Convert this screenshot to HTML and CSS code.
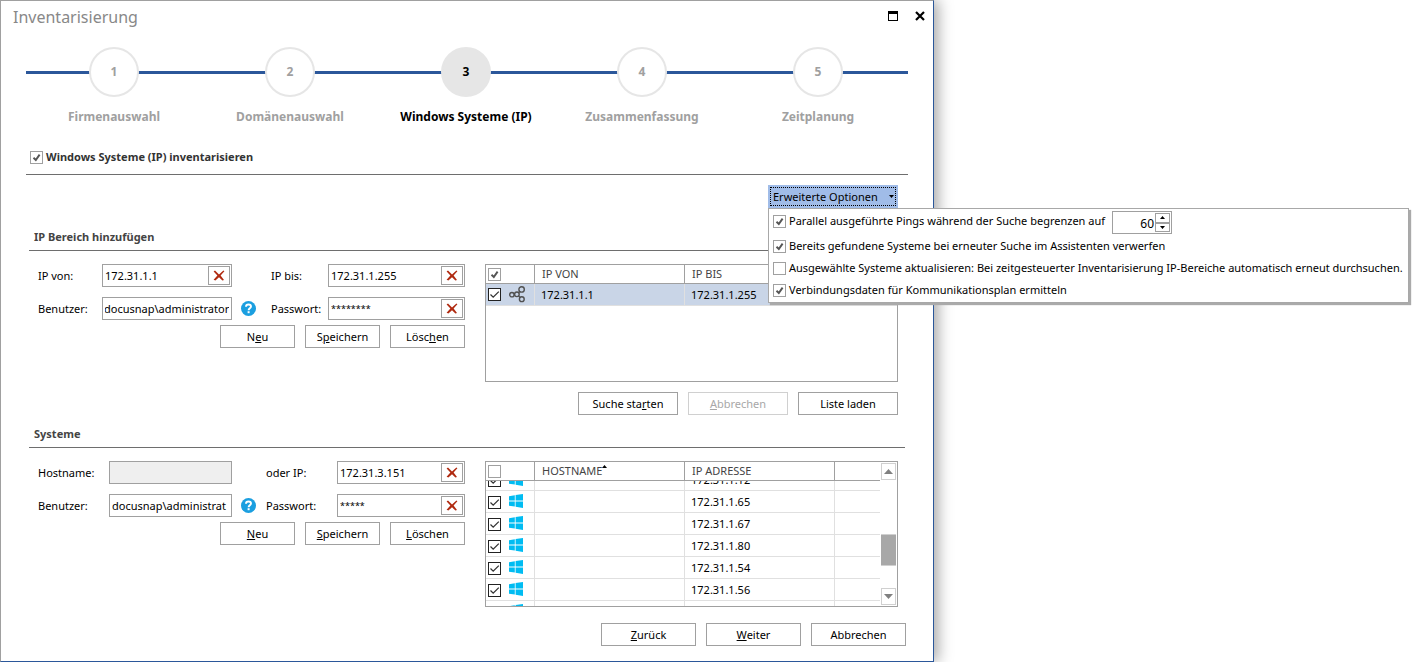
FILE: index.html
```html
<!DOCTYPE html>
<html lang="de">
<head>
<meta charset="utf-8">
<title>Inventarisierung</title>
<link rel="stylesheet" href="styles.css">
</head>
<body>
<svg class="defs" aria-hidden="true">
  <symbol id="cross" viewBox="0 0 12 11"><path d="M2 0.5 6 4.6 10.4 0.4 11.4 1.2 7.6 5.4 11 10 9.4 10.6 6 7.2 2.4 10.6 0.6 9.8 4.4 5.6 0.6 1.6Z" fill="#b02a10"/></symbol>
  <symbol id="win" viewBox="0 0 14 14"><path d="M0 2.2 5.8 1.2V6.4H0ZM6.6 1 14 0V6.4H6.6ZM0 7.4H5.8V12.6L0 11.8ZM6.6 7.4H14V14L6.6 12.8Z" fill="#00bcf2"/></symbol>
  <symbol id="help" viewBox="0 0 15 15"><circle cx="7.5" cy="7.5" r="7.5" fill="#1b9fe0"/><path d="M5 5.7C5 4.2 6 3.5 7.5 3.5S10 4.3 10 5.6C10 7.2 7.6 7.3 7.6 9.2" fill="none" stroke="#fff" stroke-width="1.9"/><rect x="6.6" y="10.2" width="2" height="2" fill="#fff"/></symbol>
</svg>
<main class="window">
  <header class="titlebar">
    <h1>Inventarisierung</h1>
    <div class="window-controls">
      <button type="button" aria-label="Maximieren"><svg width="10" height="10" viewBox="0 0 10 10"><path d="M0 0H10V10H0ZM1 3V9H9V3Z" fill="#000" fill-rule="evenodd"/></svg></button>
      <button type="button" aria-label="Schließen"><svg width="10" height="10" viewBox="0 0 10 10"><path d="M1 1 9 9M9 1 1 9" stroke="#000" stroke-width="2.2"/></svg></button>
    </div>
  </header>

  <ol class="steps">
    <li><span class="circle">1</span><span>Firmenauswahl</span></li>
    <li><span class="circle">2</span><span>Domänenauswahl</span></li>
    <li class="current" aria-current="step"><span class="circle">3</span><span>Windows Systeme (IP)</span></li>
    <li><span class="circle">4</span><span>Zusammenfassung</span></li>
    <li><span class="circle">5</span><span>Zeitplanung</span></li>
  </ol>

  <label class="check enable"><input type="checkbox" checked>Windows Systeme (IP) inventarisieren</label>

  <div class="options">
    <button type="button" class="options-button" aria-expanded="true">Erweiterte Optionen <svg width="5" height="3" viewBox="0 0 5 3"><path d="M0 0H5L2.5 3Z"/></svg></button>
    <div class="options-menu">
      <div class="limit">
        <label class="check"><input type="checkbox" checked>Parallel ausgeführte Pings während der Suche begrenzen auf</label>
        <span class="spinner">
          <input type="text" value="60" aria-label="Anzahl Pings">
          <span class="spinner-buttons">
            <button type="button" aria-label="Erhöhen"><svg width="5" height="3" viewBox="0 0 5 3"><path d="M0 3H5L2.5 0Z"/></svg></button>
            <button type="button" aria-label="Verringern"><svg width="5" height="3" viewBox="0 0 5 3"><path d="M0 0H5L2.5 3Z"/></svg></button>
          </span>
        </span>
      </div>
      <label class="check"><input type="checkbox" checked>Bereits gefundene Systeme bei erneuter Suche im Assistenten verwerfen</label>
      <label class="check"><input type="checkbox">Ausgewählte Systeme aktualisieren: Bei zeitgesteuerter Inventarisierung IP-Bereiche automatisch erneut durchsuchen.</label>
      <label class="check"><input type="checkbox" checked>Verbindungsdaten für Kommunikationsplan ermitteln</label>
    </div>
  </div>

  <section>
    <h2>IP Bereich hinzufügen</h2>
    <div class="section-body">
      <form class="entry">
        <div class="fields range">
          <label for="ip-from">IP von:</label>
          <span class="field"><input id="ip-from" type="text" value="172.31.1.1"><button type="button" aria-label="Leeren"><svg width="12" height="11"><use href="#cross"/></svg></button></span>
          <span></span>
          <label for="ip-to">IP bis:</label>
          <span class="field"><input id="ip-to" type="text" value="172.31.1.255"><button type="button" aria-label="Leeren"><svg width="12" height="11"><use href="#cross"/></svg></button></span>
          <label for="range-user">Benutzer:</label>
          <span class="field"><input id="range-user" class="scroll-end" type="text" value="docusnap\administrator"></span>
          <svg class="help" width="15" height="15"><use href="#help"/></svg>
          <label for="range-pass">Passwort:</label>
          <span class="field"><input id="range-pass" class="secret" type="text" value="********"><button type="button" aria-label="Leeren"><svg width="12" height="11"><use href="#cross"/></svg></button></span>
        </div>
        <div class="buttons">
          <button type="button" class="btn">N<u>e</u>u</button>
          <button type="button" class="btn">S<u>p</u>eichern</button>
          <button type="button" class="btn">Lösc<u>h</u>en</button>
        </div>
      </form>
      <div class="list">
        <div class="grid-box ranges">
          <div class="scroller">
            <table>
              <thead><tr><th class="mark"><input type="checkbox" checked aria-label="Alle auswählen"></th><th class="col">IP VON</th><th class="col">IP BIS</th><th></th></tr></thead>
              <tbody><tr class="selected"><td class="mark"><input type="checkbox" checked aria-label="172.31.1.1"><svg width="17" height="17" viewBox="0 0 17 17" fill="none" stroke="#505050" stroke-width="1.4"><circle cx="2.9" cy="8.7" r="2.2"/><circle cx="7.9" cy="8.3" r="2.3"/><circle cx="12.6" cy="3.4" r="2.7"/><circle cx="12.8" cy="13.2" r="2.4"/><path d="M9.6 6.7 10.8 5.4M9.6 9.9 11 11.5"/></svg></td><td>172.31.1.1</td><td>172.31.1.255</td><td></td></tr></tbody>
            </table>
          </div>
        </div>
        <div class="buttons">
          <button type="button" class="btn wide">Suche sta<u>r</u>ten</button>
          <button type="button" class="btn wide" disabled><u>A</u>bbrechen</button>
          <button type="button" class="btn wide">Liste laden</button>
        </div>
      </div>
    </div>
  </section>

  <section>
    <h2>Systeme</h2>
    <div class="section-body">
      <form class="entry">
        <div class="fields hosts">
          <label for="host">Hostname:</label>
          <span class="field"><input id="host" type="text" disabled></span>
          <span></span>
          <label for="host-ip">oder IP:</label>
          <span class="field"><input id="host-ip" type="text" value="172.31.3.151"><button type="button" aria-label="Leeren"><svg width="12" height="11"><use href="#cross"/></svg></button></span>
          <label for="host-user">Benutzer:</label>
          <span class="field"><input id="host-user" type="text" value="docusnap\administrat"></span>
          <svg class="help" width="15" height="15"><use href="#help"/></svg>
          <label for="host-pass">Passwort:</label>
          <span class="field"><input id="host-pass" class="secret" type="text" value="*****"><button type="button" aria-label="Leeren"><svg width="12" height="11"><use href="#cross"/></svg></button></span>
        </div>
        <div class="buttons">
          <button type="button" class="btn"><u>N</u>eu</button>
          <button type="button" class="btn"><u>S</u>peichern</button>
          <button type="button" class="btn"><u>L</u>öschen</button>
        </div>
      </form>
      <div class="list">
        <div class="grid-box systems">
          <div class="scroller" id="systems">
            <table>
              <thead><tr><th class="mark"><input type="checkbox" aria-label="Alle auswählen"></th><th class="col">HOSTNAME<svg class="sort" width="5" height="3" viewBox="0 0 5 3"><path d="M0 3H5L2.5 0Z"/></svg></th><th class="col">IP ADRESSE</th><th></th></tr></thead>
              <tbody>
                <tr><td class="mark"><input type="checkbox" checked aria-label="172.31.1.12"><svg width="14" height="14"><use href="#win"/></svg></td><td></td><td>172.31.1.12</td><td></td></tr>
                <tr><td class="mark"><input type="checkbox" checked aria-label="172.31.1.65"><svg width="14" height="14"><use href="#win"/></svg></td><td></td><td>172.31.1.65</td><td></td></tr>
                <tr><td class="mark"><input type="checkbox" checked aria-label="172.31.1.67"><svg width="14" height="14"><use href="#win"/></svg></td><td></td><td>172.31.1.67</td><td></td></tr>
                <tr><td class="mark"><input type="checkbox" checked aria-label="172.31.1.80"><svg width="14" height="14"><use href="#win"/></svg></td><td></td><td>172.31.1.80</td><td></td></tr>
                <tr><td class="mark"><input type="checkbox" checked aria-label="172.31.1.54"><svg width="14" height="14"><use href="#win"/></svg></td><td></td><td>172.31.1.54</td><td></td></tr>
                <tr><td class="mark"><input type="checkbox" checked aria-label="172.31.1.56"><svg width="14" height="14"><use href="#win"/></svg></td><td></td><td>172.31.1.56</td><td></td></tr>
                <tr><td class="mark"><input type="checkbox" checked aria-label="System"><svg width="14" height="14"><use href="#win"/></svg></td><td></td><td></td><td></td></tr>
              </tbody>
            </table>
          </div>
          <div class="scrollbar">
            <button type="button" aria-label="Nach oben"><svg width="9" height="5" viewBox="0 0 9 5"><path d="M0 5H9L4.5 0Z"/></svg></button>
            <span class="before"></span><span class="thumb"></span><span class="after"></span>
            <button type="button" aria-label="Nach unten"><svg width="9" height="5" viewBox="0 0 9 5"><path d="M0 0H9L4.5 5Z"/></svg></button>
          </div>
        </div>
      </div>
    </div>
  </section>

  <footer class="buttons">
    <button type="button" class="btn nav"><u>Z</u>urück</button>
    <button type="button" class="btn nav"><u>W</u>eiter</button>
    <button type="button" class="btn nav">Abbrechen</button>
  </footer>
</main>
<script src="script.js"></script>
</body>
</html>
```
FILE: styles.css
```css
* { box-sizing: border-box; }
body {
  margin: 0;
  background: #fff;
  color: #000;
  font: 11px/20px "Noto Sans", "Open Sans", sans-serif;
}
button, input { font: inherit; color: inherit; margin: 0; }
button { padding: 0; background: #fff; border: 0; }
h1, h2, ol { margin: 0; padding: 0; }
svg { display: block; flex: none; }
.defs { position: absolute; width: 0; height: 0; }

.window {
  max-width: 934px;
  min-height: 100vh;
  padding: 0 25px 15px;
  border: 1px solid #2b579a;
  border-top-color: #a0a0a0;
  border-left-color: #a0a0a0;
  box-shadow: 4px 0 14px rgba(0, 0, 0, 0.35);
}

.titlebar {
  display: flex;
  justify-content: space-between;
  height: 46px;
  margin: 0 -17px 0 -13px;
  padding-top: 5px;
}
.titlebar h1 { font-size: 16px; line-height: 22px; font-weight: 400; color: #888; }
.window-controls { display: flex; gap: 17px; height: 20px; align-items: center; }

.steps {
  display: grid;
  grid-template-columns: repeat(5, 1fr);
  padding-right: 2px;
  background: linear-gradient(#2b579a, #2b579a) 0 24px / 100% 3px no-repeat;
  list-style: none;
}
.steps li {
  display: flex;
  flex-direction: column;
  align-items: center;
  gap: 10px;
  color: #a0a0a0;
  font-size: 12px;
  font-weight: 700;
}
.circle {
  width: 50px;
  height: 50px;
  border: 2px solid #e6e6e6;
  border-radius: 50%;
  background: #fff;
  line-height: 46px;
  text-align: center;
}
.steps .current { color: #000; }
.current .circle { background: #e6e6e6; }

.check { display: flex; align-items: center; gap: 3px; white-space: nowrap; }
input[type="checkbox"] {
  appearance: none;
  flex: none;
  width: 13px;
  height: 13px;
  border: 1px solid #a0a0a0;
  background: #fff;
}
input[type="checkbox"]:checked {
  background: #fff url("data:image/svg+xml,%3Csvg xmlns='http://www.w3.org/2000/svg' viewBox='0 0 11 11'%3E%3Cpath d='M2.5 5.8 4.8 8 8.6 2.6' fill='none' stroke='%23555' stroke-width='1.9'/%3E%3C/svg%3E");
}
td input[type="checkbox"]:checked {
  background: #fff url("data:image/svg+xml,%3Csvg xmlns='http://www.w3.org/2000/svg' viewBox='0 0 11 11'%3E%3Cpath d='M1.5 5.5 4.2 8.2 9.8 2.6' fill='none' stroke='%23333' stroke-width='1.3'/%3E%3C/svg%3E");
}
.enable {
  margin-top: 20px;
  padding: 0 4px 7px;
  border-bottom: 1px solid #6e6e6e;
  color: #333;
  font-weight: 700;
}

.options { position: relative; width: 130px; margin: 10px 10px 19px auto; }
.options-button {
  display: flex;
  align-items: center;
  justify-content: space-between;
  width: 100%;
  height: 23px;
  padding: 0 4px 0 5px;
  background: #a0bce8;
  outline: 1px dotted #000;
  outline-offset: -3px;
  white-space: nowrap;
}
.options-menu {
  position: absolute;
  z-index: 1;
  top: 100%;
  left: 0;
  display: flex;
  flex-direction: column;
  gap: 2px;
  padding: 1px 5px 2px 4px;
  border: 1px solid #a8a8a8;
  background: #fff;
  box-shadow: 2px 2px 1px #aaa;
}
.limit { display: flex; gap: 7px; }
.limit .check { height: 22px; }
.spinner { display: flex; width: 60px; height: 23px; margin-top: 1px; padding: 1px; border: 1px solid #a0a0a0; }
.spinner input { flex: 1; min-width: 0; border: 0; padding: 3px 1px 0 0; text-align: right; font-size: 12px; outline: 0; }
.spinner-buttons { display: grid; grid-template-rows: 1fr 1fr; width: 15px; }
.spinner-buttons button { display: grid; place-items: center; border: 1px solid #a0a0a0; }

section { margin: 0 3px 9px; }
h2 {
  padding: 0 5px 3px;
  border-bottom: 1px solid #6e6e6e;
  color: #444;
  font-size: 11px;
  line-height: 20px;
}
.section-body { display: flex; gap: 20px; padding: 13px 7px 0 9px; }
.entry { flex: none; width: 427px; }
.fields { display: grid; row-gap: 10px; align-items: center; }
.range { grid-template-columns: 64px 130px 39px 57px minmax(0, 1fr); }
.hosts { grid-template-columns: 71px 123px 34px 71px minmax(0, 1fr); }
.field { display: flex; min-width: 0; height: 23px; padding: 1px; border: 1px solid #a0a0a0; }
.field:has(:disabled) { background: #efefef; }
.field input { flex: 1; width: 0; min-width: 0; padding: 0 1px; border: 0; background: none; outline: 0; }
.field .secret { font-size: 9px; }
.field button { display: grid; place-items: center; width: 22px; border: 1px solid #a0a0a0; }
.help { margin-left: 9px; }
.buttons { display: flex; justify-content: flex-end; gap: 10px; }
.entry .buttons { margin-top: 5px; }
.list .buttons { margin-top: 10px; }
.btn { width: 75px; height: 23px; border: 1px solid #a0a0a0; line-height: 21px; }
.btn:disabled { color: #a8a8a8; border-color: #d0d0d0; }
.wide { width: 100px; }
.nav { width: 95px; }
footer.buttons { margin-top: 16px; padding-right: 2px; }

.list { flex: 1; min-width: 0; }
.grid-box { display: flex; border: 1px solid #a0a0a0; }
.ranges { height: 118px; }
.systems { height: 146px; }
.scroller { flex: 1; overflow: auto; scrollbar-width: none; }
table { width: 100%; table-layout: fixed; border-collapse: separate; border-spacing: 0; }
th, td { padding: 0 6px; border-right: 1px solid #e0e0e0; border-bottom: 1px solid #e0e0e0; text-align: left; font-weight: 400; line-height: 18px; }
th { position: sticky; top: 0; height: 19px; padding: 0 7px; border-color: #a0a0a0; background: #fff; color: #444; }
td { height: 22px; }
th:last-child, td:last-child { border-right: 0; }
.mark { width: 49px; padding: 0 2px; }
th.mark input { display: block; }
td.mark input { float: left; margin: 2px 8px 0 0; border-color: #222; }
.col { width: 150px; }
.sort { display: inline; vertical-align: 7px; }
.selected td { background: #c9d5e7; }
.scrollbar { display: flex; flex-direction: column; width: 17px; padding: 1px; }
.scrollbar button { display: grid; place-items: center; height: 17px; border: 1px solid #d0d0d0; fill: #808080; }
.thumb { height: 32px; background: #a8a8a8; border: 1px solid #d0d0d0; border-width: 1px 0; }
.before { flex: 54; }
.after { flex: 22; }
```
FILE: script.js
```js
document.querySelectorAll(".scroll-end").forEach((input) => {
  input.scrollLeft = input.scrollWidth;
});
document.getElementById("systems").scrollTop = 12;
```
